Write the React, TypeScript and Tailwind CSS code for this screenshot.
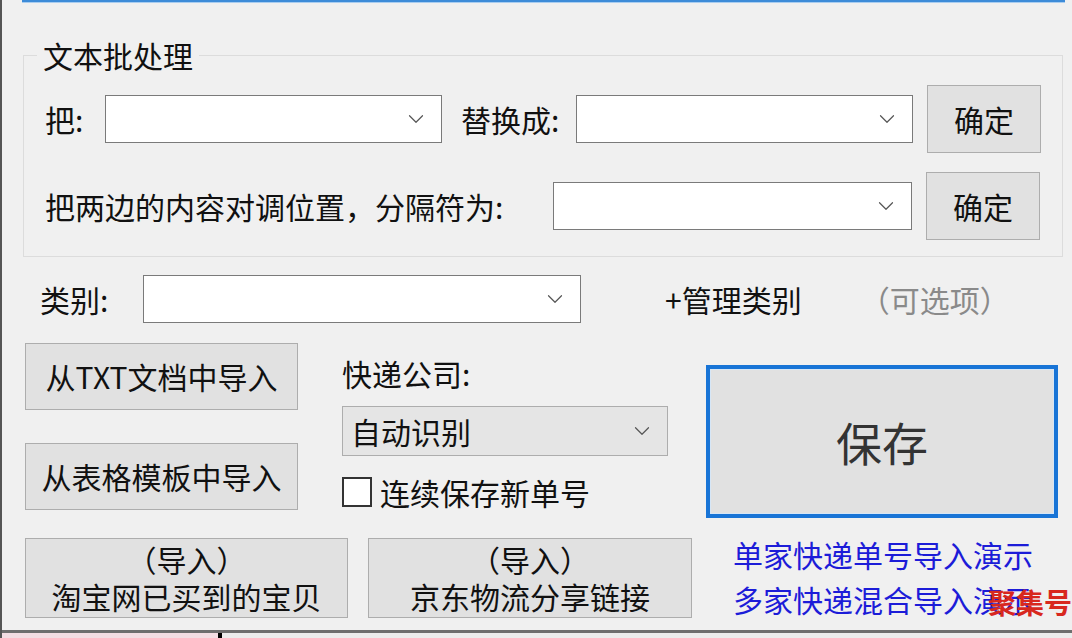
import { ChevronDown } from "lucide-react";

const font = { fontFamily: '"Noto Sans CJK SC", "Noto Sans", sans-serif' };

// Windows-style combo box with a thin chevron on the right
const Combo = ({ width, value, gray }: { width: string; value?: string; gray?: boolean }) => (
  <div
    className={`${width} h-[48px] shrink-0 flex items-center justify-between pl-[8px] pr-[12px] border ${
      gray ? "bg-[#e5e5e5] border-[#adadad]" : "bg-white border-[#7a7a7a]"
    }`}
  >
    <span className="text-[30px] leading-none text-[#111]">{value}</span>
    <ChevronDown className="w-[26px] h-[26px] text-[#555]" strokeWidth={1.1} />
  </div>
);

const Btn = ({ className, children }: { className: string; children: React.ReactNode }) => (
  <button className={`${className} shrink-0 bg-[#e1e1e1] border border-[#adadad] text-[#111] flex flex-col items-center justify-center`}>
    {children}
  </button>
);

export default function App() {
  return (
    <div
      className="w-[1072px] h-[638px] bg-[#f0f0f0] relative overflow-hidden border-l-2 border-[#555] flex flex-col"
      style={font}
    >
      {/* edge of the focused box above */}
      <div className="ml-[20px] w-[1043px] h-[3px] bg-[#3d8bd8] border-b border-[#a9cdf0]" />

      {/* 文本批处理 group */}
      <fieldset className="ml-[21px] w-[1040px] mt-[35px] border border-[#dcdcdc] pl-[21px] pr-[21px] pb-[16px]">
        <legend className="-ml-[8px] px-[6px] text-[30px] leading-[34px] text-[#111]">文本批处理</legend>
        <div className="flex items-center h-[68px] mt-[13px]">
          <span className="w-[60px] text-[30px] leading-none text-[#111]">把:</span>
          <Combo width="w-[337px]" />
          <span className="ml-[19px] w-[115px] text-[30px] leading-none text-[#111]">替换成:</span>
          <Combo width="w-[337px]" />
          <Btn className="ml-[14px] w-[114px] h-[68px] text-[30px]">确定</Btn>
        </div>
        <div className="flex items-center h-[68px] mt-[19px]">
          <span className="w-[508px] text-[30px] leading-none text-[#111]">把两边的内容对调位置，分隔符为:</span>
          <Combo width="w-[359px]" />
          <Btn className="ml-[14px] w-[114px] h-[68px] text-[30px]">确定</Btn>
        </div>
      </fieldset>

      <div className="pl-[23px] flex flex-col">
        {/* 类别 row */}
        <div className="flex items-center mt-[18px] pl-[15px]">
          <span className="w-[103px] text-[30px] leading-none text-[#111]">类别:</span>
          <Combo width="w-[438px]" />
          <span className="ml-[84px] text-[30px] leading-none text-[#111]">+管理类别</span>
          <span className="ml-[58px] text-[30px] leading-none text-[#8a8a8a]">（可选项）</span>
        </div>

        {/* middle area */}
        <div className="flex mt-[20px]">
          <div className="flex flex-col gap-[33px]">
            <Btn className="w-[273px] h-[67px] text-[30px]">从TXT文档中导入</Btn>
            <Btn className="w-[273px] h-[67px] text-[30px]">从表格模板中导入</Btn>
          </div>
          <div className="ml-[44px] w-[326px] shrink-0 flex flex-col pt-[10px]">
            <span className="text-[30px] leading-[40px] text-[#111]">快递公司:</span>
            <div className="mt-[13px]">
              <Combo width="w-[326px] h-[50px]" value="自动识别" gray />
            </div>
            <label className="mt-[20px] flex items-center h-[32px]">
              <span className="w-[30px] h-[30px] bg-white border-2 border-[#333]" />
              <span className="ml-[8px] text-[30px] leading-none text-[#111]">连续保存新单号</span>
            </label>
          </div>
          <button className="ml-[38px] mt-[22px] w-[352px] h-[153px] shrink-0 bg-[#e1e1e1] border-[4px] border-[#1874d6] outline outline-1 outline-[#d6e6f6] -outline-offset-[5px] flex items-center justify-center text-[46px] text-[#333]">
            保存
          </button>
        </div>

        {/* bottom row */}
        <div className="flex mt-[20px]">
          <Btn className="w-[323px] h-[80px] text-[30px] leading-[37px]">
            <span>（导入）</span>
            <span>淘宝网已买到的宝贝</span>
          </Btn>
          <Btn className="ml-[20px] w-[324px] h-[80px] text-[30px] leading-[37px]">
            <span>（导入）</span>
            <span>京东物流分享链接</span>
          </Btn>
          <div className="ml-[41px] -mt-[6px] flex flex-col text-[30px] leading-[45px] text-[#1c1cd8]">
            <span>单家快递单号导入演示</span>
            <span>多家快递混合导入演示</span>
          </div>
        </div>
      </div>

      {/* window bottom edge */}
      <div className="mt-auto h-[3px] bg-[#6e6e6e]" />
      <div className="h-[5px] flex">
        <div className="w-[216px] bg-[#f3dde3]" />
        <div className="w-[4px] bg-black" />
        <div className="flex-1 bg-[#ececec]" />
      </div>

      {/* watermark */}
      <span className="absolute right-[0px] top-[588px] text-[28px] font-bold leading-none text-[#d8281e]">聚集号</span>
    </div>
  );
}
